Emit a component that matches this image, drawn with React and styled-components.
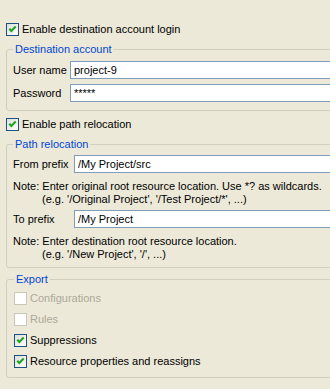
import styled, { createGlobalStyle } from "styled-components"

const GlobalStyle = createGlobalStyle`
    html, body {
        margin: 0;
        padding: 0;
        background: #ECE9D8;
        overflow: hidden;
    }
    body {
        font-family: "Liberation Sans", Arial, sans-serif;
        font-size: 11px;
        color: #000000;
    }
`

function CheckBox({ checked, disabled }) {
    return (
        <Box width="13" height="13" viewBox="0 0 13 13">
            <defs>
                <linearGradient id="cbfill" x1="0" y1="0" x2="1" y2="1">
                    <stop offset="0" stopColor="#DCDCD7" />
                    <stop offset="1" stopColor="#FFFFFF" />
                </linearGradient>
            </defs>
            <rect
                x="0.5"
                y="0.5"
                width="12"
                height="12"
                fill={disabled ? "#FFFFFF" : "url(#cbfill)"}
                stroke={disabled ? "#CAC8BB" : "#1C5180"}
            />
            {checked && (
                <path d="M3.3 5.8 L5.3 7.9 L9.7 3.6" fill="none" stroke="#21A121" strokeWidth="2.1" />
            )}
        </Box>
    )
}

export default function App() {
    return (
        <Page>
            <GlobalStyle />
            <CheckRow>
                <CheckBox checked />
                <span>Enable destination account login</span>
            </CheckRow>

            <Group $top={7} $pad="5px 0 8px 6px">
                <Legenda>Destination account</Legenda>
                <Rows $gap={5}>
                    <FieldRow $label={57}>
                        <span>User name</span>
                        <Campo defaultValue="project-9" readOnly />
                    </FieldRow>
                    <FieldRow $label={57}>
                        <span>Password</span>
                        <Campo defaultValue="*****" readOnly />
                    </FieldRow>
                </Rows>
            </Group>

            <CheckRow $top={7}>
                <CheckBox checked />
                <span>Enable path relocation</span>
            </CheckRow>

            <Group $top={7} $pad="4px 0 6px 6px">
                <Legenda>Path relocation</Legenda>
                <FieldRow $label={61}>
                    <span>From prefix</span>
                    <Campo defaultValue="/My Project/src" readOnly />
                </FieldRow>
                <Nota $bottom={4}>
                    <p>Note: Enter original root resource location. Use *? as wildcards.</p>
                    <p className="recuo">(e.g. '/Original Project', '/Test Project/*', ...)</p>
                </Nota>
                <FieldRow $label={61}>
                    <span>To prefix</span>
                    <Campo defaultValue="/My Project" readOnly />
                </FieldRow>
                <Nota $bottom={0}>
                    <p>Note: Enter destination root resource location.</p>
                    <p className="recuo">(e.g. '/New Project', '/', ...)</p>
                </Nota>
            </Group>

            <Group $top={5} $pad="6px 0 9px 7px">
                <Legenda>Export</Legenda>
                <Rows $gap={8}>
                    <CheckRow $disabled>
                        <CheckBox disabled />
                        <span>Configurations</span>
                    </CheckRow>
                    <CheckRow $disabled>
                        <CheckBox disabled />
                        <span>Rules</span>
                    </CheckRow>
                    <CheckRow>
                        <CheckBox checked />
                        <span>Suppressions</span>
                    </CheckRow>
                    <CheckRow>
                        <CheckBox checked />
                        <span>Resource properties and reassigns</span>
                    </CheckRow>
                </Rows>
            </Group>
        </Page>
    )
}

const Page = styled.div`
    width: 370px;
    padding: 23px 0 12px 6px;
    display: flex;
    flex-direction: column;
`

const Box = styled.svg`
    display: block;
    flex: none;
`

const CheckRow = styled.div`
    display: flex;
    align-items: center;
    gap: 3px;
    height: 13px;
    line-height: 13px;
    margin-top: ${props => props.$top || 0}px;
    color: ${props => props.$disabled ? '#ACA899' : '#000000'};
    white-space: nowrap;
`

const Group = styled.fieldset`
    margin: ${props => props.$top}px 0 0 0;
    padding: ${props => props.$pad};
    border: 1px solid #D0D0BF;
    border-radius: 3px;
    min-inline-size: 0;
    display: flex;
    flex-direction: column;
`

const Legenda = styled.legend`
    padding: 0 2px;
    margin: 0;
    font-size: 11px;
    line-height: 13px;
    color: #0046D5;
`

const Rows = styled.div`
    display: flex;
    flex-direction: column;
    gap: ${props => props.$gap}px;
`

const FieldRow = styled.div`
    display: grid;
    grid-template-columns: ${props => props.$label}px 1fr;
    align-items: center;
    height: 18px;
    white-space: nowrap;
`

const Campo = styled.input`
    box-sizing: border-box;
    height: 18px;
    width: 100%;
    margin: 0;
    border: 1px solid #7F9DB9;
    padding: 0 3px;
    background: #FFFFFF;
    font-family: "Liberation Sans", Arial, sans-serif;
    font-size: 11px;
    color: #000000;
    outline: none;
`

const Nota = styled.div`
    margin: 7px 0 ${props => props.$bottom}px 0;
    line-height: 13px;
    white-space: nowrap;
    > p {
        margin: 0;
    }
    > .recuo {
        padding-left: 29px;
    }
`
